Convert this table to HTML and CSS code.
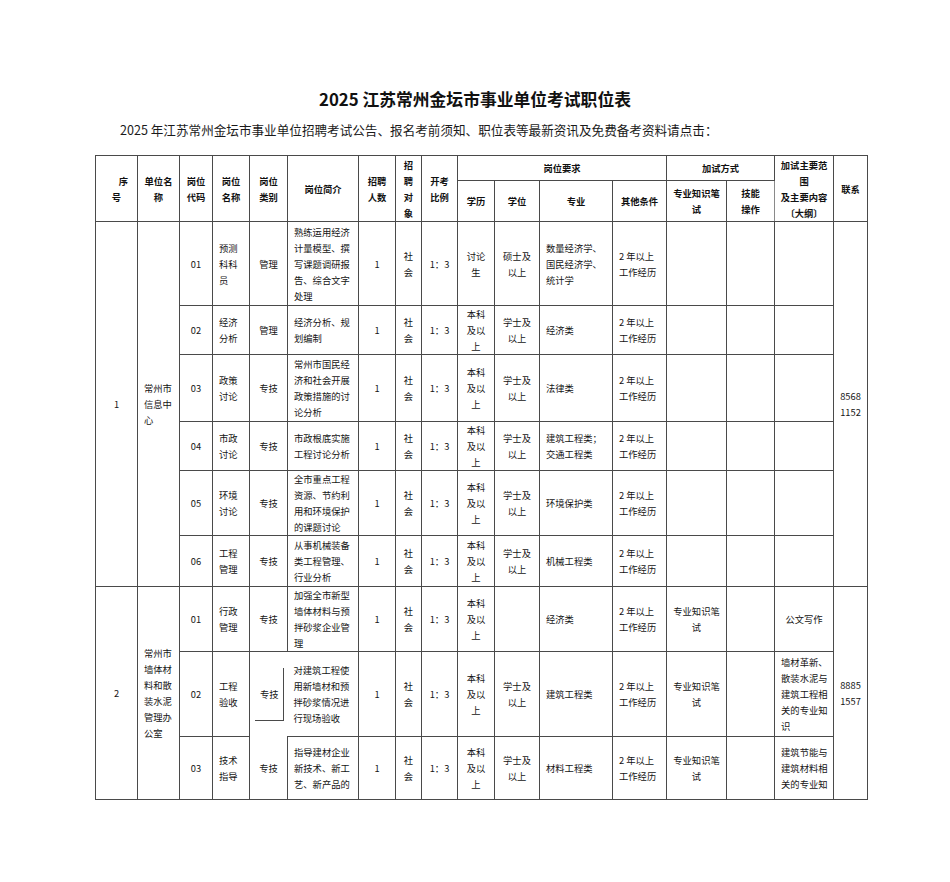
FILE: index.html
```html
<!DOCTYPE html>
<html lang="zh-CN">
<head>
<meta charset="utf-8">
<title>2025江苏常州金坛市事业单位考试职位表</title>
<link rel="stylesheet" href="styles.css">
</head>
<body>
<h1 class="doc-title">2025 江苏常州金坛市事业单位考试职位表</h1>
<p class="intro">2025 年江苏常州金坛市事业单位招聘考试公告、报名考前须知、职位表等最新资讯及免费备考资料请点击：</p>
<table class="jobs">
  <colgroup>
    <col style="width:42px"><col style="width:42px"><col style="width:33px"><col style="width:37px">
    <col style="width:38px"><col style="width:71px"><col style="width:37px"><col style="width:26px">
    <col style="width:36px"><col style="width:37px"><col style="width:45px"><col style="width:73px">
    <col style="width:54px"><col style="width:60px"><col style="width:48px"><col style="width:59px">
    <col style="width:34px">
  </colgroup>
  <thead>
    <tr class="h1">
      <th rowspan="2"><span class="indent">序</span><br>号</th>
      <th rowspan="2">单位名<br>称</th>
      <th rowspan="2">岗位<br>代码</th>
      <th rowspan="2">岗位<br>名称</th>
      <th rowspan="2">岗位<br>类别</th>
      <th rowspan="2">岗位简介</th>
      <th rowspan="2">招聘<br>人数</th>
      <th rowspan="2">招<br>聘<br>对<br>象</th>
      <th rowspan="2">开考<br>比例</th>
      <th colspan="4">岗位要求</th>
      <th colspan="2">加试方式</th>
      <th rowspan="2" class="lite">加试主要范<br>围<br>及主要内容<br>〔大纲〕</th>
      <th rowspan="2">联系</th>
    </tr>
    <tr class="h2">
      <th>学历</th>
      <th>学位</th>
      <th class="lite">专业</th>
      <th>其他条件</th>
      <th>专业知识笔<br>试</th>
      <th>技能<br>操作</th>
    </tr>
  </thead>
  <tbody>
    <tr class="r1">
      <td rowspan="6">1</td>
      <td rowspan="6" class="l">常州市<br>信息中<br>心</td>
      <td>01</td>
      <td class="l">预测<br>科科<br>员</td>
      <td>管理</td>
      <td class="l lite">熟练运用经济<br>计量模型、撰<br>写课题调研报<br>告、综合文字<br>处理</td>
      <td>1</td>
      <td>社<br>会</td>
      <td>1：3</td>
      <td>讨论<br>生</td>
      <td>硕士及<br>以上</td>
      <td class="l lite">数量经济学、<br>国民经济学、<br>统计学</td>
      <td class="l">2 年以上<br>工作经历</td>
      <td></td>
      <td></td>
      <td class="lite"></td>
      <td rowspan="6">8568<br>1152</td>
    </tr>
    <tr class="r2">
      <td>02</td>
      <td class="l">经济<br>分析</td>
      <td>管理</td>
      <td class="l lite">经济分析、规<br>划编制</td>
      <td>1</td>
      <td>社<br>会</td>
      <td>1：3</td>
      <td>本科<br>及以<br>上</td>
      <td>学士及<br>以上</td>
      <td class="l lite">经济类</td>
      <td class="l">2 年以上<br>工作经历</td>
      <td></td>
      <td></td>
      <td class="lite"></td>
    </tr>
    <tr class="r3">
      <td>03</td>
      <td class="l">政策<br>讨论</td>
      <td>专技</td>
      <td class="l lite">常州市国民经<br>济和社会开展<br>政策措施的讨<br>论分析</td>
      <td>1</td>
      <td>社<br>会</td>
      <td>1：3</td>
      <td>本科<br>及以<br>上</td>
      <td>学士及<br>以上</td>
      <td class="l lite">法律类</td>
      <td class="l">2 年以上<br>工作经历</td>
      <td></td>
      <td></td>
      <td class="lite"></td>
    </tr>
    <tr class="r4">
      <td>04</td>
      <td class="l">市政<br>讨论</td>
      <td>专技</td>
      <td class="l lite">市政根底实施<br>工程讨论分析</td>
      <td>1</td>
      <td>社<br>会</td>
      <td>1：3</td>
      <td>本科<br>及以<br>上</td>
      <td>学士及<br>以上</td>
      <td class="l lite">建筑工程类；<br>交通工程类</td>
      <td class="l">2 年以上<br>工作经历</td>
      <td></td>
      <td></td>
      <td class="lite"></td>
    </tr>
    <tr class="r5">
      <td>05</td>
      <td class="l">环境<br>讨论</td>
      <td>专技</td>
      <td class="l lite">全市重点工程<br>资源、节约利<br>用和环境保护<br>的课题讨论</td>
      <td>1</td>
      <td>社<br>会</td>
      <td>1：3</td>
      <td>本科<br>及以<br>上</td>
      <td>学士及<br>以上</td>
      <td class="l lite">环境保护类</td>
      <td class="l">2 年以上<br>工作经历</td>
      <td></td>
      <td></td>
      <td class="lite"></td>
    </tr>
    <tr class="r6">
      <td>06</td>
      <td class="l">工程<br>管理</td>
      <td>专技</td>
      <td class="l lite">从事机械装备<br>类工程管理、<br>行业分析</td>
      <td>1</td>
      <td>社<br>会</td>
      <td>1：3</td>
      <td>本科<br>及以<br>上</td>
      <td>学士及<br>以上</td>
      <td class="l lite">机械工程类</td>
      <td class="l">2 年以上<br>工作经历</td>
      <td></td>
      <td></td>
      <td class="lite"></td>
    </tr>
    <tr class="r7">
      <td rowspan="3">2</td>
      <td rowspan="3" class="l">常州市<br>墙体材<br>料和散<br>装水泥<br>管理办<br>公室</td>
      <td>01</td>
      <td class="l">行政<br>管理</td>
      <td>专技</td>
      <td class="l lite">加强全市新型<br>墙体材料与预<br>拌砂浆企业管<br>理</td>
      <td>1</td>
      <td>社<br>会</td>
      <td>1：3</td>
      <td>本科<br>及以<br>上</td>
      <td></td>
      <td class="l lite">经济类</td>
      <td class="l">2 年以上<br>工作经历</td>
      <td>专业知识笔<br>试</td>
      <td></td>
      <td class="lite">公文写作</td>
      <td rowspan="3">8885<br>1557</td>
    </tr>
    <tr class="r8">
      <td>02</td>
      <td class="l">工程<br>验收</td>
      <td class="split"><div class="split-box">专技</div></td>
      <td class="l lite open-left">对建筑工程使<br>用新墙材和预<br>拌砂浆情况进<br>行现场验收</td>
      <td>1</td>
      <td>社<br>会</td>
      <td>1：3</td>
      <td>本科<br>及以<br>上</td>
      <td>学士及<br>以上</td>
      <td class="l lite">建筑工程类</td>
      <td class="l">2 年以上<br>工作经历</td>
      <td>专业知识笔<br>试</td>
      <td></td>
      <td class="l lite">墙材革新、<br>散装水泥与<br>建筑工程相<br>关的专业知<br>识</td>
    </tr>
    <tr class="r9">
      <td>03</td>
      <td class="l">技术<br>指导</td>
      <td>专技</td>
      <td class="l lite">指导建材企业<br>新技术、新工<br>艺、新产品的</td>
      <td>1</td>
      <td>社<br>会</td>
      <td>1：3</td>
      <td>本科<br>及以<br>上</td>
      <td>学士及<br>以上</td>
      <td class="l lite">材料工程类</td>
      <td class="l">2 年以上<br>工作经历</td>
      <td>专业知识笔<br>试</td>
      <td></td>
      <td class="l lite">建筑节能与<br>建筑材料相<br>关的专业知</td>
    </tr>
  </tbody>
</table>
</body>
</html>
```

FILE: styles.css
```css
html, body {
  margin: 0;
  padding: 0;
  background: #ffffff;
}

body {
  width: 950px;
  font-family: "Noto Sans CJK SC", "Noto Sans", sans-serif;
  color: #141414;
  padding-top: 89px;
}

.doc-title {
  margin: 0;
  font-size: 16.8px;
  line-height: 20px;
  font-weight: 700;
  text-align: center;
  color: #111;
}

.intro {
  margin: 13px 0 0 95px;
  font-size: 12.6px;
  line-height: 16px;
  text-indent: 25px;
  color: #1a1a1a;
  white-space: nowrap;
}

.jobs {
  margin: 17px 0 0 95px;
  width: 772px;
  table-layout: fixed;
  border-collapse: collapse;
  font-size: 9.3px;
  line-height: 16px;
}

.jobs th,
.jobs td {
  border: 1px solid #4a4a4a;
  padding: 0 5px;
  text-align: center;
  vertical-align: middle;
  word-break: keep-all;
  white-space: nowrap;
  overflow: hidden;
}

.jobs th {
  font-weight: 700;
  color: #111;
}

.jobs .l {
  text-align: left;
  padding-left: 6px;
}

.jobs .lite {
  border-left: 1px solid #8a8a8a;
}

.indent {
  padding-left: 14px;
}

.h1 th { height: 24px; }
.h2 th { height: 40px; }
.r1 td { height: 83px; }
.r2 td { height: 48px; }
.r3 td { height: 66px; }
.r4 td { height: 48px; }
.r5 td { height: 64px; }
.r6 td { height: 50px; }
.r7 td { height: 64px; }
.r8 td { height: 84px; }
.r9 td { height: 62px; }

.jobs td.split {
  border-right: hidden;
  border-bottom: hidden;
  padding: 0;
}

.split-box {
  width: 28px;
  height: 52px;
  margin: 0 auto;
  border-right: 1px solid #4a4a4a;
  border-bottom: 1px solid #4a4a4a;
  display: flex;
  align-items: center;
  justify-content: center;
  position: relative;
  left: 1px;
}

.jobs td.open-left {
  border-left: hidden;
}
```
